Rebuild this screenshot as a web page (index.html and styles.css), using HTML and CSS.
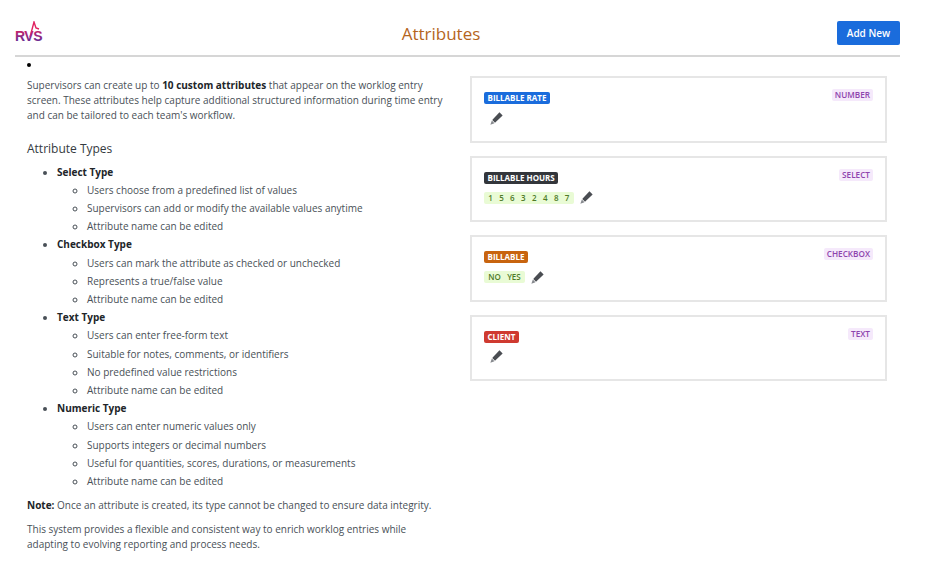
FILE: index.html
```html
<!DOCTYPE html>
<html lang="en">
<head>
  <meta charset="UTF-8">
  <meta name="viewport" content="width=device-width, initial-scale=1.0">
  <title>Attributes</title>
  <link rel="stylesheet" href="styles.css">
</head>
<body>
  <div class="page">
    <header class="topbar">
      <div class="logo">
        <svg width="30" height="24" viewBox="0 0 30 24">
          <defs>
            <linearGradient id="logo-grad" x1="0" y1="0" x2="0" y2="1">
              <stop offset="0" stop-color="#e0215f"/>
              <stop offset="0.75" stop-color="#6f2c91"/>
            </linearGradient>
          </defs>
          <path d="M15 16 L19 1 L21 7 L24 8" fill="none" stroke="#e0215f" stroke-width="1.4"/>
          <text x="0" y="20" class="logo-text" fill="url(#logo-grad)">RVS</text>
        </svg>
      </div>
      <h1 class="title">Attributes</h1>
      <button class="add-btn">Add New</button>
    </header>

    <main class="content">
      <section class="help">
        <ul class="empty-list"><li></li></ul>
        <p>Supervisors can create up to <b>10 custom attributes</b> that appear on the worklog entry screen. These attributes help capture additional structured information during time entry and can be tailored to each team's workflow.</p>
        <h2>Attribute Types</h2>
        <ul class="types">
          <li><b>Select Type</b>
            <ul>
              <li>Users choose from a predefined list of values</li>
              <li>Supervisors can add or modify the available values anytime</li>
              <li>Attribute name can be edited</li>
            </ul>
          </li>
          <li><b>Checkbox Type</b>
            <ul>
              <li>Users can mark the attribute as checked or unchecked</li>
              <li>Represents a true/false value</li>
              <li>Attribute name can be edited</li>
            </ul>
          </li>
          <li><b>Text Type</b>
            <ul>
              <li>Users can enter free-form text</li>
              <li>Suitable for notes, comments, or identifiers</li>
              <li>No predefined value restrictions</li>
              <li>Attribute name can be edited</li>
            </ul>
          </li>
          <li><b>Numeric Type</b>
            <ul>
              <li>Users can enter numeric values only</li>
              <li>Supports integers or decimal numbers</li>
              <li>Useful for quantities, scores, durations, or measurements</li>
              <li>Attribute name can be edited</li>
            </ul>
          </li>
        </ul>
        <p class="note"><b>Note:</b> Once an attribute is created, its type cannot be changed to ensure data integrity.</p>
        <p class="closing">This system provides a flexible and consistent way to enrich worklog entries while adapting to evolving reporting and process needs.</p>
      </section>

      <section class="cards">
        <div class="card">
          <div class="card-main">
            <span class="name blue">BILLABLE RATE</span>
            <div class="values">
              <button class="edit"><svg viewBox="0 0 14 14"><path d="M10.2 .4 13.6 3.8 5.4 11.6 2.4 8.6Z"/><path class="tip" d="M2 9.2 4.8 12 .4 13.6Z"/></svg></button>
            </div>
          </div>
          <span class="type">NUMBER</span>
        </div>
        <div class="card">
          <div class="card-main">
            <span class="name dark">BILLABLE HOURS</span>
            <div class="values">
              <span class="opts"><i>1</i><i>5</i><i>6</i><i>3</i><i>2</i><i>4</i><i>8</i><i>7</i></span>
              <button class="edit"><svg viewBox="0 0 14 14"><path d="M10.2 .4 13.6 3.8 5.4 11.6 2.4 8.6Z"/><path class="tip" d="M2 9.2 4.8 12 .4 13.6Z"/></svg></button>
            </div>
          </div>
          <span class="type">SELECT</span>
        </div>
        <div class="card">
          <div class="card-main">
            <span class="name orange">BILLABLE</span>
            <div class="values">
              <span class="opts"><i>NO</i><i>YES</i></span>
              <button class="edit"><svg viewBox="0 0 14 14"><path d="M10.2 .4 13.6 3.8 5.4 11.6 2.4 8.6Z"/><path class="tip" d="M2 9.2 4.8 12 .4 13.6Z"/></svg></button>
            </div>
          </div>
          <span class="type">CHECKBOX</span>
        </div>
        <div class="card">
          <div class="card-main">
            <span class="name red">CLIENT</span>
            <div class="values">
              <button class="edit"><svg viewBox="0 0 14 14"><path d="M10.2 .4 13.6 3.8 5.4 11.6 2.4 8.6Z"/><path class="tip" d="M2 9.2 4.8 12 .4 13.6Z"/></svg></button>
            </div>
          </div>
          <span class="type">TEXT</span>
        </div>
      </section>
    </main>
  </div>
</body>
</html>
```

FILE: styles.css
```css
* {
  box-sizing: border-box;
}
body {
  margin: 0;
  font-family: "Open Sans", Arial, sans-serif;
  font-size: 10px;
  line-height: 15px;
  color: #495057;
  background: #fff;
}
.page {
  width: 900px;
  padding-left: 15px;
}
.topbar {
  display: flex;
  align-items: center;
  justify-content: space-between;
  height: 57px;
  padding-top: 7px;
  border-bottom: 2px solid #d6d6d6;
}
.logo {
  height: 24px;
  margin-top: 4px;
}
.logo-text {
  font-family: "Liberation Sans", Arial, sans-serif;
  font-size: 14px;
  font-weight: 700;
  letter-spacing: -0.5px;
}
.title {
  margin: 4px 0 0 0;
  font-size: 17px;
  font-weight: 400;
  color: #b5651d;
}
.add-btn {
  width: 63px;
  height: 24px;
  margin-top: 3px;
  padding: 0;
  border: none;
  border-radius: 2px;
  background: #1a6cdc;
  color: #fff;
  font-family: inherit;
  font-size: 10px;
  font-weight: 600;
}
.content {
  display: grid;
  grid-template-columns: 443px 417px;
  padding-left: 12px;
}
.help {
  padding-right: 23px;
}
.help b {
  color: #212529;
  font-weight: 700;
}
.help p {
  margin: 0;
}
.empty-list {
  margin: 0;
  padding: 0;
  height: 20.5px;
  list-style-position: inside;
  color: #000;
}
.help h2 {
  margin: 17.5px 0 5.5px;
  font-size: 12px;
  line-height: 17px;
  font-weight: 400;
  color: #343a40;
}
.types,
.types ul {
  margin: 0;
  padding-left: 30px;
}
.types li {
  line-height: 18.2px;
}
.help .note {
  margin-top: 7.5px;
}
.help .closing {
  margin-top: 9px;
}
.cards {
  display: flex;
  flex-direction: column;
  gap: 13px;
  padding-top: 19px;
}
.card {
  display: flex;
  justify-content: space-between;
  align-items: flex-start;
  height: 66.5px;
  padding: 11px 12px 0;
  border: 2px solid #e6e6e6;
}
.card-main {
  padding-top: 3px;
}
.name {
  display: inline-block;
  height: 12px;
  padding: 0 3.5px;
  border-radius: 2px;
  color: #fff;
  font-size: 8px;
  line-height: 12px;
  font-weight: 700;
  vertical-align: top;
}
.blue { background: #1a6cdc; }
.dark { background: #33363b; }
.orange { background: #c8640f; }
.red { background: #cf3a30; }
.values {
  display: flex;
  align-items: center;
  margin-top: 4px;
  height: 14px;
}
.opts {
  display: flex;
  height: 12px;
  padding: 0 1px;
  border-radius: 2px;
  background: #e9fbd5;
  color: #4f7a28;
  font-size: 8px;
  line-height: 12px;
  font-weight: 600;
}
.opts i {
  font-style: normal;
  padding: 0 3.2px;
}
.edit {
  display: flex;
  width: 13px;
  height: 13px;
  margin-left: 6px;
  padding: 0;
  border: none;
  background: none;
}
.edit svg {
  width: 13px;
  height: 13px;
  fill: #4a4d52;
}
.edit .tip {
  fill: #85888d;
}
.type {
  height: 12px;
  padding: 0 3px;
  border-radius: 2px;
  background: #f5e9fb;
  color: #8e44ad;
  font-size: 8.2px;
  line-height: 12px;
  font-weight: 600;
}
```
